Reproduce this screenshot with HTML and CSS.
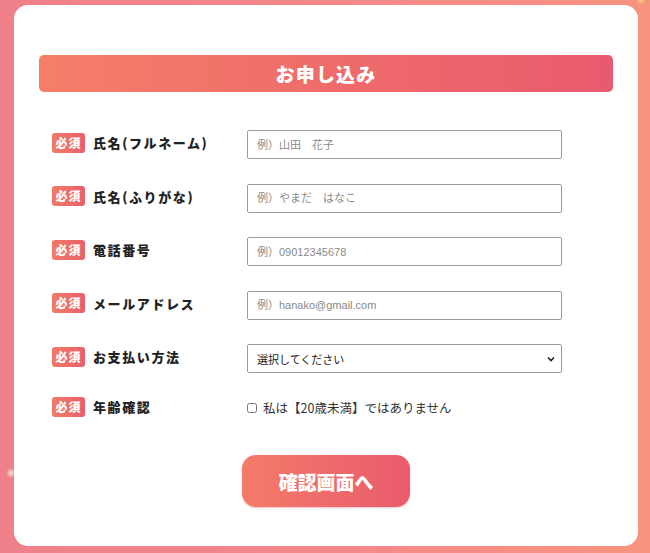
FILE: index.html
```html
<!DOCTYPE html>
<html lang="ja">
<head>
<meta charset="UTF-8" />
<meta name="viewport" content="width=device-width, initial-scale=1" />
<title>お申し込み</title>
<link rel="stylesheet" href="styles.css">
</head>
<body>

<span class="sparkle sparkle-left"></span>
<span class="sparkle sparkle-top"></span>

<div class="card">
  <h1 class="form-title">お申し込み</h1>

  <form class="entry-form" onsubmit="return false;">
    <div class="form-row">
      <div class="form-label"><span class="req">必須</span><span class="label-text">氏名(フルネーム)</span></div>
      <input type="text" class="form-input" placeholder="例）山田　花子">
    </div>
    <div class="form-row">
      <div class="form-label"><span class="req">必須</span><span class="label-text">氏名(ふりがな)</span></div>
      <input type="text" class="form-input" placeholder="例）やまだ　はなこ">
    </div>
    <div class="form-row">
      <div class="form-label"><span class="req">必須</span><span class="label-text">電話番号</span></div>
      <input type="tel" class="form-input" placeholder="例）09012345678">
    </div>
    <div class="form-row">
      <div class="form-label"><span class="req">必須</span><span class="label-text">メールアドレス</span></div>
      <input type="email" class="form-input" placeholder="例）hanako@gmail.com">
    </div>
    <div class="form-row">
      <div class="form-label"><span class="req">必須</span><span class="label-text">お支払い方法</span></div>
      <select class="form-input form-select">
        <option>選択してください</option>
      </select>
    </div>
    <div class="form-row row-check">
      <div class="form-label"><span class="req">必須</span><span class="label-text">年齢確認</span></div>
      <label class="check"><input type="checkbox"><span>私は【20歳未満】ではありません</span></label>
    </div>

    <div class="submit-wrap">
      <button type="submit" class="submit-btn">確認画面へ</button>
    </div>
  </form>
</div>

</body>
</html>
```

FILE: styles.css
```css
* { box-sizing: border-box; margin: 0; padding: 0; }
body {
  font-family: "Noto Sans CJK JP", "Noto Sans", sans-serif;
  background: linear-gradient(90deg, #ef808a 0%, #f3888a 50%, #f8937f 100%);
  width: 650px; height: 553px; overflow: hidden;
  padding: 5px 12px 0 14px;
}
.sparkle {
  position: absolute;
  width: 10px; height: 10px;
  background: radial-gradient(circle, rgba(255,240,220,0.9) 0%, rgba(255,240,220,0) 70%);
}
.sparkle-left { left: 6px; top: 468px; }
.sparkle-top { left: 636px; top: -5px; background: radial-gradient(circle, #fbd27a 0%, rgba(251,210,122,0) 70%); }

.card {
  width: 624px; height: 541px;
  background: #fff;
  border-radius: 14px;
  padding: 50px 25px 0;
}
.form-title {
  height: 37px;
  border-radius: 5px;
  background: linear-gradient(90deg, #f57f69 0%, #ef6c6a 50%, #e85a6e 100%);
  color: #fff;
  font-size: 19px; font-weight: 900;
  letter-spacing: 1.2px;
  text-align: center;
  line-height: 37px;
}

.entry-form {
  display: flex; flex-direction: column;
  gap: 24.5px;
  margin-top: 38px;
  padding-left: 13px;
}
.form-row {
  display: flex; align-items: center;
  height: 29px;
}
.form-label {
  width: 195px;
  display: flex; align-items: center;
  margin-top: -4px;
}
.req {
  width: 33px; height: 20px;
  border-radius: 3px;
  background: linear-gradient(90deg, #f27a67, #e9606b);
  color: #fff;
  font-size: 12px; font-weight: 900;
  line-height: 20px; text-align: center;
  letter-spacing: 1px;
}
.label-text {
  margin-left: 8px;
  font-size: 13px; font-weight: 900;
  letter-spacing: 1.6px;
  color: #222;
}
.form-input {
  width: 315px; height: 29px;
  border: 1px solid #9a9a9a;
  border-radius: 2px;
  padding: 0 9px;
  font-family: "Liberation Sans", "Noto Sans CJK JP", sans-serif;
  font-size: 11px;
  color: #333;
  background: #fff;
  outline: none;
}
.form-input::placeholder { color: #8a8a8a; }
.form-select {
  appearance: none;
  font-family: "Noto Sans CJK JP", sans-serif;
  color: #222;
  background: #fff url("data:image/svg+xml;utf8,<svg xmlns='http://www.w3.org/2000/svg' width='8' height='6' viewBox='0 0 8 6'><path d='M1 1.5 L4 4.5 L7 1.5' fill='none' stroke='%23222' stroke-width='1.6'/></svg>") no-repeat right 6px center;
}
.row-check { height: 24px; margin-top: -2px; }
.row-check .form-label { margin-top: -2px; }
.check {
  display: flex; align-items: center;
  font-size: 12.5px; color: #333;
}
.check input {
  width: 10px; height: 10px;
  margin-right: 6px;
  margin-top: 1px;
}
.submit-wrap {
  display: flex; justify-content: center;
  padding-right: 13px;
  margin-top: 11px;
}
.submit-btn {
  width: 168px; height: 52px;
  border: none;
  border-radius: 14px;
  background: linear-gradient(90deg, #f47b68 0%, #e95b6d 100%);
  color: #fff;
  font-family: "Noto Sans CJK JP", sans-serif;
  font-size: 19px; font-weight: 900;
  box-shadow: 0 1px 2px rgba(180,60,70,0.3);
}
```
